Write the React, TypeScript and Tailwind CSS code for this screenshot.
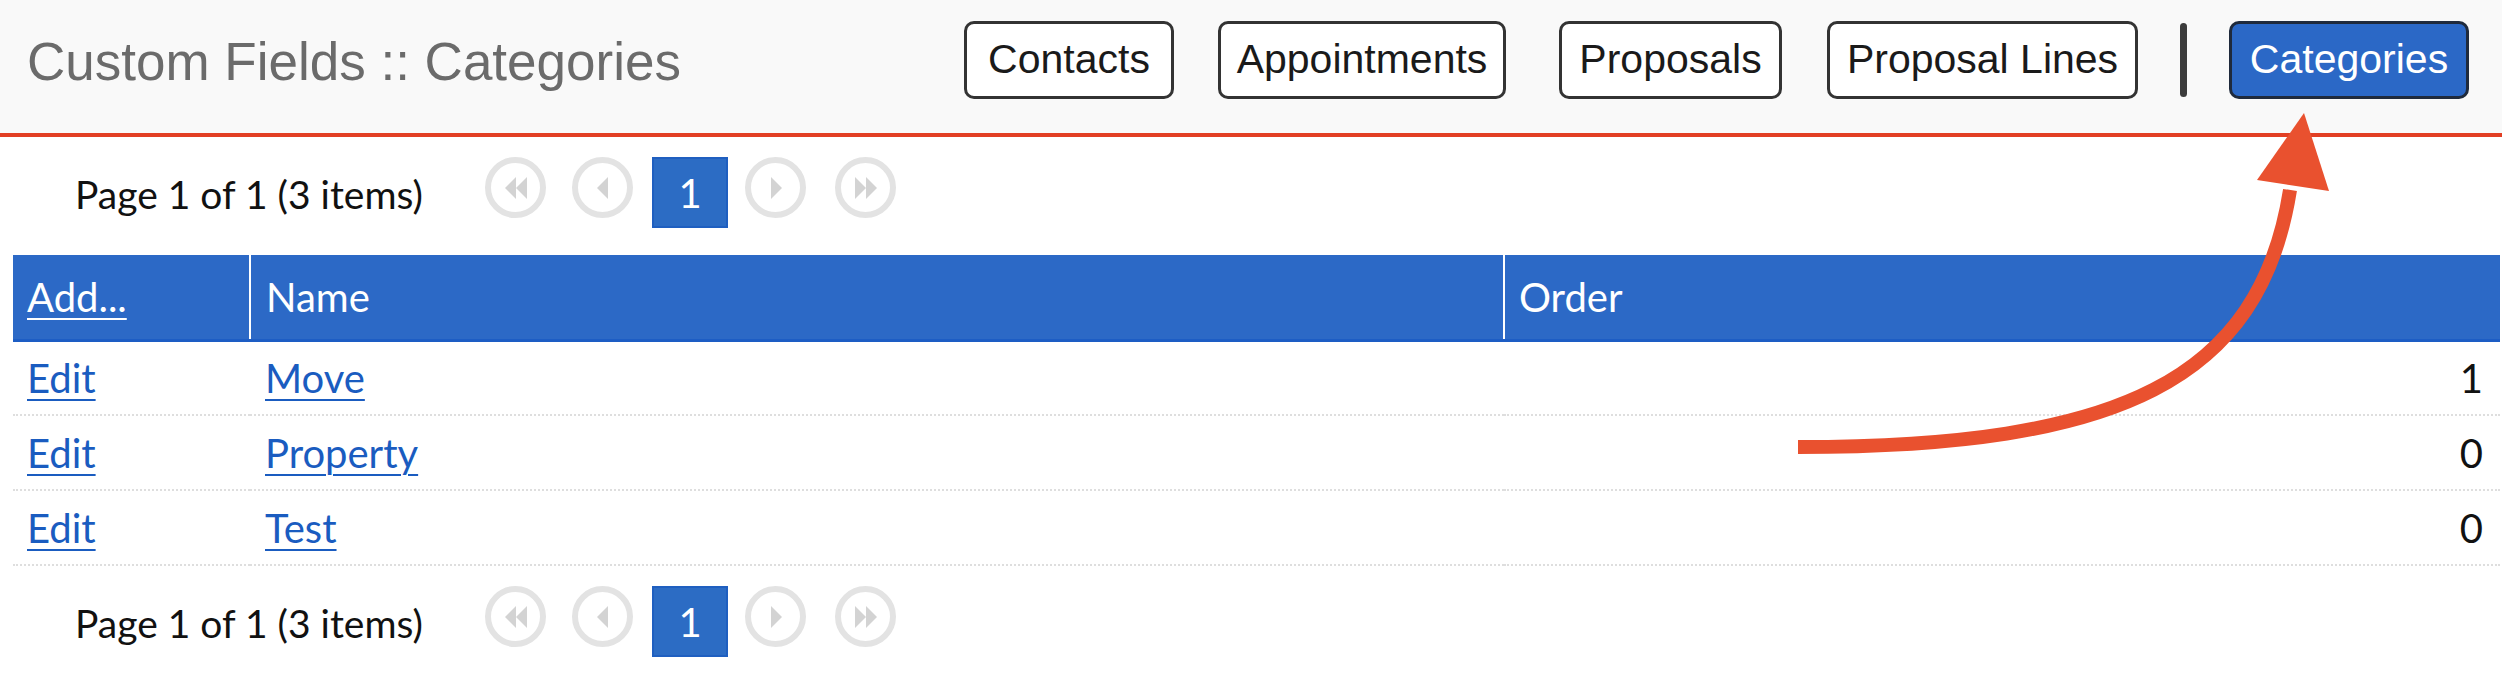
import React from 'react';

const navItems = [
  { label: 'Contacts', width: 'w-[210px]', gap: '' },
  { label: 'Appointments', width: 'w-[288px]', gap: 'ml-[44px]' },
  { label: 'Proposals', width: 'w-[223px]', gap: 'ml-[53px]' },
  { label: 'Proposal Lines', width: 'w-[311px]', gap: 'ml-[45px]' },
];

const rows = [
  { name: 'Move', order: 1 },
  { name: 'Property', order: 0 },
  { name: 'Test', order: 0 },
];

function PagerCircle({ kind, className = '' }: { kind: 'first' | 'prev' | 'next' | 'last'; className?: string }) {
  return (
    <div
      className={`flex h-[61px] w-[61px] items-center justify-center rounded-full border-[6px] border-[#e3e3e3] ${className}`}
    >
      <svg width="30" height="30" viewBox="0 0 30 30" className="fill-[#d3d3d3]">
        {kind === 'first' && (
          <>
            <polygon points="4,15 15,4 15,26" />
            <polygon points="15,15 26,4 26,26" />
          </>
        )}
        {kind === 'prev' && <polygon points="9,15 20,4 20,26" />}
        {kind === 'next' && <polygon points="21,15 10,4 10,26" />}
        {kind === 'last' && (
          <>
            <polygon points="26,15 15,4 15,26" />
            <polygon points="15,15 4,4 4,26" />
          </>
        )}
      </svg>
    </div>
  );
}

function Pager({ height }: { height: string }) {
  return (
    <div className={`flex items-start pl-[75px] pt-[20px] ${height}`}>
      <span className="flex h-[74px] w-[410px] items-center text-[39px] text-[#111]">Page 1 of 1 (3 items)</span>
      <div className="flex items-start">
        <PagerCircle kind="first" />
        <PagerCircle kind="prev" className="ml-[26px]" />
        <div className="ml-[19px] flex h-[71px] w-[76px] items-center justify-center border-2 border-[#1f5fc0] bg-[#2c6cc4] text-[40px] text-white">
          1
        </div>
        <PagerCircle kind="next" className="ml-[17px]" />
        <PagerCircle kind="last" className="ml-[29px]" />
      </div>
    </div>
  );
}

export default function App() {
  return (
    <div className="relative h-[684px] w-[2502px] overflow-hidden bg-white font-['Lato',sans-serif]">
      <header className="flex h-[137px] items-start border-b-4 border-[#e23f24] bg-[#f9f9f9] pl-[27px] pr-[33px]">
        <h1 className="mt-[32px] flex-1 font-['Liberation_Sans',Arial,sans-serif] text-[53px] leading-[60px] text-[#6b6b6b]">
          Custom Fields :: Categories
        </h1>
        <nav className="mt-[21px] flex items-center font-['Liberation_Sans',Arial,sans-serif] text-[41px]">
          {navItems.map((item) => (
            <button
              key={item.label}
              className={`h-[78px] rounded-[10px] border-[3px] border-[#333] bg-white text-[#1a1a1a] ${item.width} ${item.gap}`}
            >
              {item.label}
            </button>
          ))}
          <span className="ml-[42px] h-[74px] w-[7px] rounded-full bg-[#3c3c3c]" />
          <button className="ml-[42px] h-[78px] w-[240px] rounded-[10px] border-[3px] border-[#1f2a3c] bg-[#2b68c6] text-white">
            Categories
          </button>
        </nav>
      </header>

      <Pager height="h-[118px]" />

      <table className="ml-[13px] w-[2487px] border-collapse text-[40px]">
        <thead>
          <tr className="h-[85px] border-b-[3px] border-[#1d5dc4] bg-[#2c69c6] text-left text-white">
            <th className="w-[237px] border-r-2 border-white pl-[14px] font-normal">
              <a href="#" className="underline decoration-2 underline-offset-[6px]">Add...</a>
            </th>
            <th className="w-[1254px] border-r-2 border-white pl-[15px] font-normal">Name</th>
            <th className="pl-[14px] font-normal">Order</th>
          </tr>
        </thead>
        <tbody>
          {rows.map((row) => (
            <tr key={row.name} className="h-[75px] border-b-2 border-dotted border-[#dedede]">
              <td className="pl-[14px]">
                <a href="#" className="text-[#1a5cc0] underline decoration-2 underline-offset-[6px]">Edit</a>
              </td>
              <td className="pl-[15px]">
                <a href="#" className="text-[#1a5cc0] underline decoration-2 underline-offset-[6px]">{row.name}</a>
              </td>
              <td className="pr-[17px] text-right text-[#111]">{row.order}</td>
            </tr>
          ))}
        </tbody>
      </table>

      <Pager height="h-[117px]" />

      {/* annotation arrow pointing at the active tab */}
      <svg className="pointer-events-none absolute left-0 top-0" width="2502" height="684">
        <path d="M1798 447 C2120 447 2260 380 2290 190" fill="none" stroke="#e9512f" strokeWidth="14" />
        <polygon points="2304,113 2257,180 2329,191" fill="#e9512f" />
      </svg>
    </div>
  );
}
